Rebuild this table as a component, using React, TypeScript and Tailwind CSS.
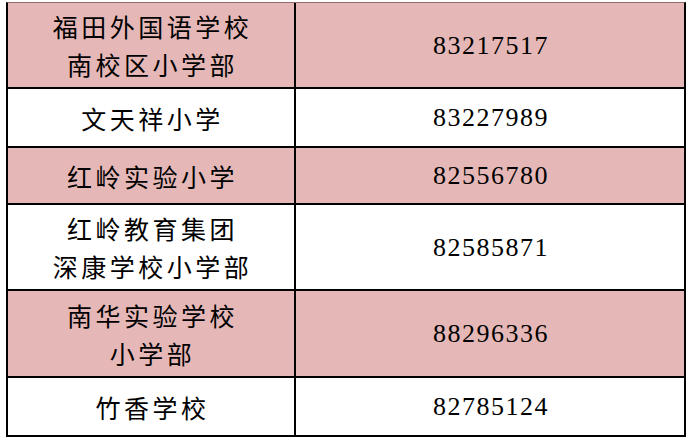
const rows = [
  { name: ['福田外国语学校', '南校区小学部'], phone: '83217517', h: 'h-[86px]', pink: true },
  { name: ['文天祥小学'], phone: '83227989', h: 'h-[59px]', pink: false },
  { name: ['红岭实验小学'], phone: '82556780', h: 'h-[57px]', pink: true },
  { name: ['红岭教育集团', '深康学校小学部'], phone: '82585871', h: 'h-[86px]', pink: false },
  { name: ['南华实验学校', '小学部'], phone: '88296336', h: 'h-[87px]', pink: true },
  { name: ['竹香学校'], phone: '82785124', h: 'h-[59px]', pink: false },
];

export default function App() {
  return (
    <div className="h-[441px] w-[691px] bg-white pt-[2px] pl-[6px]">
      <div className="w-[680px] border-x-2 border-black border-t border-t-[#8f6b6b]">
        {rows.map((r) => (
          <div
            key={r.phone}
            className={`flex ${r.h} border-b-2 border-black ${r.pink ? 'bg-[#e5b8b7]' : 'bg-white'}`}
          >
            <div className="flex w-[288px] flex-col items-center justify-center border-r-2 border-black font-['Noto_Sans_CJK_SC',sans-serif] text-[25px] leading-[38px] tracking-[3.5px] text-black pl-[3px]">
              {r.name.map((line) => (
                <span key={line}>{line}</span>
              ))}
            </div>
            <div className="flex flex-1 items-center justify-center font-['Liberation_Serif',serif] text-[26px] tracking-[1.5px] text-black pl-[2px]">
              {r.phone}
            </div>
          </div>
        ))}
      </div>
    </div>
  );
}
